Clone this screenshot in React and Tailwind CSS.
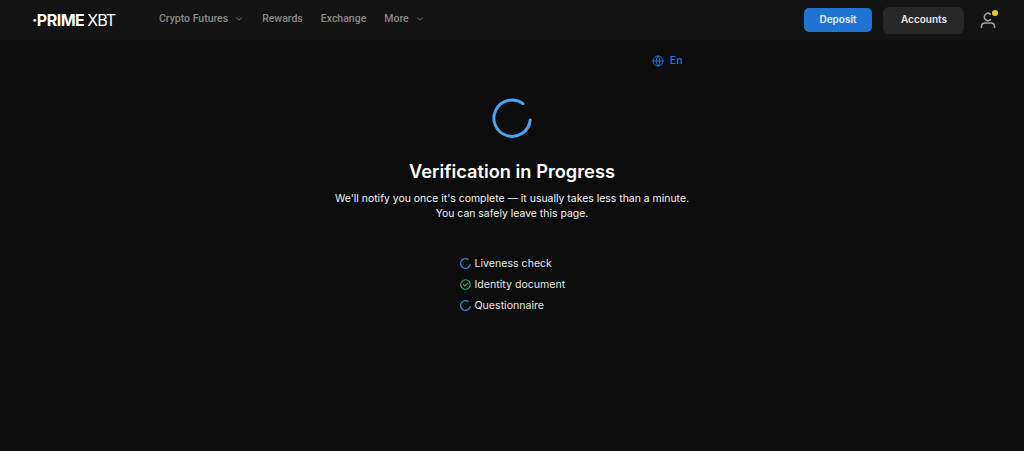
import { ChevronDown, Globe } from 'lucide-react'

const navItems = [
  { label: 'Crypto Futures', caret: true },
  { label: 'Rewards' },
  { label: 'Exchange' },
  { label: 'More', caret: true },
]

const checks = [
  { label: 'Liveness check', done: false },
  { label: 'Identity document', done: true },
  { label: 'Questionnaire', done: false },
]

function SmallSpinner() {
  return (
    <svg className="w-[11px] h-[11px] shrink-0" viewBox="0 0 12 12" fill="none">
      <path d="M8.6 1.4A5.3 5.3 0 1 0 11.1 7.4" stroke="#3a78b8" strokeWidth="1.6" strokeLinecap="round" />
    </svg>
  )
}

function DoneIcon() {
  return (
    <svg className="w-[11px] h-[11px] shrink-0" viewBox="0 0 12 12" fill="none">
      <circle cx="6" cy="6" r="5.2" stroke="#2fb36d" strokeWidth="1.2" />
      <path d="M3.7 6.2l1.6 1.4 3-2.9" stroke="#2fb36d" strokeWidth="1.2" strokeLinecap="round" strokeLinejoin="round" />
    </svg>
  )
}

export default function App() {
  return (
    <div className="h-[451px] bg-[#0c0c0d] font-['Inter',sans-serif] overflow-hidden">
      <header className="h-[40px] bg-[#131313] flex items-center pl-[32px] pr-[28px]">
        <div className="w-[127px] flex items-center text-white text-[16px] leading-none tracking-[-0.5px]">
          <span className="font-bold">·PRIME</span>
          <span className="font-normal ml-[3px] tracking-[-1px]">XBT</span>
        </div>
        <nav className="flex items-center gap-[18px] pb-[2px] font-['Roboto',sans-serif] text-[10.5px] font-medium text-[#8a8a8a]">
          {navItems.map(({ label, caret }) => (
            <div key={label} className="flex items-center gap-[6px]">
              {label}
              {caret && <ChevronDown className="w-[10px] h-[10px]" />}
            </div>
          ))}
        </nav>
        <div className="ml-auto flex items-center">
          <button className="w-[68px] h-[24px] pb-[1px] rounded-[5px] bg-[#1f74d2] text-[#e6f0fb] text-[10px] font-semibold">
            Deposit
          </button>
          <button className="w-[81px] h-[27px] pb-[1px] ml-[11px] pl-[1px] rounded-[6px] bg-[#272727] text-[#e8e8e8] text-[10px] font-semibold">
            Accounts
          </button>
          <div className="relative w-[16px] h-[18px] ml-[16px]">
            <svg className="w-[16px] h-[18px]" viewBox="0 0 16 18" fill="none">
              <path d="M10.4 3.2A3.6 3.6 0 1 0 10.4 8.6" stroke="#a3a3a3" strokeWidth="1.5" strokeLinecap="round" />
              <path d="M1.5 16.5v-1.2c0-2 1.6-3.3 3.6-3.3h5.8c2 0 3.6 1.3 3.6 3.3v1.2" stroke="#a3a3a3" strokeWidth="1.5" strokeLinecap="round" />
            </svg>
            <span className="absolute -top-[1px] -right-[2px] w-[6px] h-[6px] rounded-full bg-[#f5c518]" />
          </div>
        </div>
      </header>

      <main className="flex flex-col items-center">
        <div className="w-[355px] flex justify-end items-center gap-[6px] mt-[14px] pr-[7px] h-[13px] text-[#2079dc] text-[10.5px] font-medium">
          <Globe className="w-[12px] h-[12px]" strokeWidth={1.8} />
          En
        </div>

        <svg className="w-[40px] h-[40px] mt-[31px]" viewBox="0 0 40 40" fill="none">
          <path d="M31 5.6A18.2 18.2 0 1 0 38.2 22" stroke="#48a4f5" strokeWidth="3" strokeLinecap="round" />
        </svg>

        <h1 className="mt-[21px] text-[18.25px] leading-[24px] font-semibold text-white">Verification in Progress</h1>
        <p className="mt-[8px] text-[10.45px] leading-[15px] text-center text-[#f2f2f2]">
          We'll notify you once it's complete — it usually takes less than a minute.
          <br />
          You can safely leave this page.
        </p>

        <ul className="mt-[35px] w-[105px] flex flex-col gap-[6px] text-[10.6px] leading-[15px] text-[#e6e6e6]">
          {checks.map(({ label, done }) => (
            <li key={label} className="flex items-center gap-[4px] whitespace-nowrap">
              {done ? <DoneIcon /> : <SmallSpinner />}
              {label}
            </li>
          ))}
        </ul>
      </main>
    </div>
  )
}
